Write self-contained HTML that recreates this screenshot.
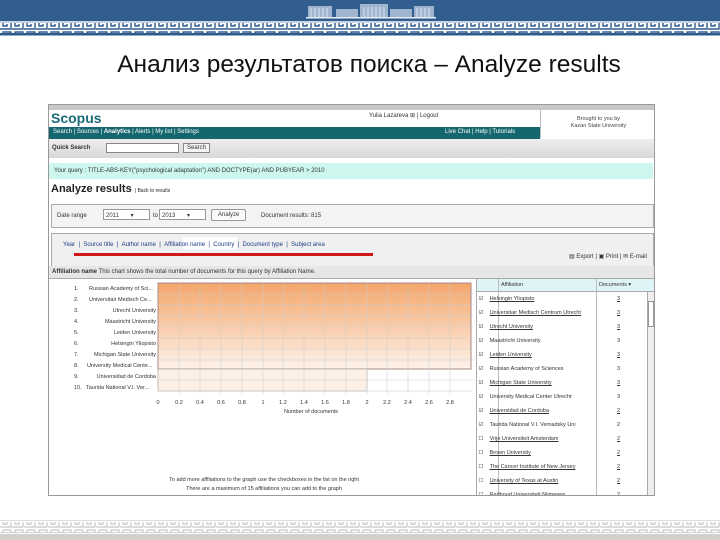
<!DOCTYPE html>
<html><head><meta charset="utf-8"><style>
*{margin:0;padding:0;box-sizing:border-box}
body{width:720px;height:540px;background:#fff;position:relative;overflow:hidden;font-family:"Liberation Sans",sans-serif}
.a{position:absolute}
.s{font-size:6px;color:#333;white-space:nowrap}
</style></head><body>
<svg class="a" style="left:0;top:0" width="720" height="40">
<defs><pattern id="k" width="12" height="10" patternUnits="userSpaceOnUse">
<path d="M0 9H11V2H3V6H7V4" fill="none" stroke="#2f5c8f" stroke-width="1.4"/></pattern>
<pattern id="g" width="12" height="10" patternUnits="userSpaceOnUse">
<path d="M0 9H11V2H3V6H7V4" fill="none" stroke="#c8c8c8" stroke-width="1.2"/></pattern></defs>
<rect width="720" height="21" fill="#325d8f"/>
<rect y="21" width="720" height="2" fill="#c9d5e4"/>
<rect y="23" width="720" height="10" fill="url(#k)"/>
<rect y="33" width="720" height="2.5" fill="#2f5c8f"/>
<g fill="#9fb4cf">
<rect x="308" y="6" width="24" height="12"/><rect x="336" y="9" width="22" height="9"/>
<rect x="360" y="4" width="28" height="14"/><rect x="390" y="9" width="22" height="9"/>
<rect x="414" y="6" width="20" height="12"/><rect x="306" y="17" width="130" height="1.5" fill="#e8eef6"/></g>
<g stroke="#e8eef6" stroke-width=".8"><path d="M311 8V17M315 8V17M319 8V17M323 8V17M327 8V17M364 7V17M368 7V17M372 7V17M376 7V17M380 7V17M384 7V17M417 8V17M421 8V17M425 8V17M429 8V17"/></g>
</svg>
<div class="a" style="left:0;top:51px;width:720px;text-align:center;font-size:24.5px;color:#111;padding-left:18px">Анализ результатов поиска – Analyze results</div>

<div class="a" style="left:48px;top:104px;width:607px;height:392px;border:1px solid #999;background:#fff;overflow:hidden">
<div class="a" style="left:0;top:0;width:607px;height:5px;background:#c8c8c8"></div>
<div class="a" style="left:2px;top:5px;font-size:14px;font-weight:bold;color:#1a6b78">Scopus</div>
<div class="a s" style="left:320px;top:7px">Yulia Lazareva ⊞ | Logout</div>
<div class="a" style="left:491px;top:5px;width:116px;height:28px;border-left:1px solid #bbb;font-size:5.5px;color:#444;text-align:center;padding-top:6px;line-height:7px">Brought to you by<br>Kazan State University</div>
<div class="a" style="left:0;top:22px;width:491px;height:12px;background:#15676f;color:#fff;font-size:6px;padding:2px 4px;white-space:nowrap">Search | Sources | <b>Analytics</b> | Alerts | My list | Settings<span style="position:absolute;left:396px">Live Chat | Help | Tutorials</span></div>
<div class="a" style="left:0;top:34px;width:607px;height:19px;background:linear-gradient(#eee,#d8d8d8)"></div>
<div class="a s" style="left:3px;top:40px;font-weight:bold">Quick Search</div>
<div class="a" style="left:57px;top:38px;width:73px;height:10px;border:1px solid #888;background:#fff"></div>
<div class="a s" style="left:134px;top:38px;border:1px solid #888;background:#f4f4f4;padding:1px 3px">Search</div>
<div class="a" style="left:0;top:58px;width:604px;height:16px;background:#cdf7ee"></div>
<div class="a s" style="left:5px;top:63px">Your query : TITLE-ABS-KEY("psychological adaptation") AND DOCTYPE(ar) AND PUBYEAR &gt; 2010</div>
<div class="a" style="left:2px;top:78px;font-size:11px;font-weight:bold;color:#222">Analyze results <span style="font-size:5px;font-weight:normal">| Back to results</span></div>
<div class="a" style="left:2px;top:99px;width:603px;height:24px;border:1px solid #aaa;background:#f3f3f3"></div>
<div class="a s" style="left:8px;top:108px">Date range</div>
<div class="a s" style="left:54px;top:104px;width:47px;height:11px;border:1px solid #999;background:#fff;padding:2px">2011 &nbsp; &nbsp; &nbsp; ▾</div>
<div class="a s" style="left:104px;top:108px">to</div>
<div class="a s" style="left:110px;top:104px;width:47px;height:11px;border:1px solid #999;background:#fff;padding:2px">2013 &nbsp; &nbsp; &nbsp; ▾</div>
<div class="a s" style="left:162px;top:104px;border:1px solid #999;background:#fafafa;padding:2px 6px;border-radius:2px">Analyze</div>
<div class="a s" style="left:212px;top:108px">Document results: 815</div>
<div class="a" style="left:2px;top:128px;width:603px;height:34px;border:1px solid #aaa;background:#f0f0f0"></div>
<div class="a" style="left:134px;top:132px;width:54px;height:13px;background:#fff"></div>
<div class="a s" style="left:14px;top:137px;color:#1a3d8a">Year &nbsp;| &nbsp;Source title &nbsp;| &nbsp;Author name &nbsp;| &nbsp;Affiliation name &nbsp;| &nbsp;Country &nbsp;| &nbsp;Document type &nbsp;| &nbsp;Subject area</div>
<div class="a" style="left:25px;top:148px;width:299px;height:2.5px;background:#d01818"></div>
<div class="a s" style="left:520px;top:148px">▤ Export | ▣ Print | ✉ E-mail</div>
<div class="a" style="left:0;top:161px;width:607px;height:13px;background:#e6e6e6;border-bottom:1px solid #aaa"></div>
<div class="a s" style="left:3px;top:164px"><b>Affiliation name</b> This chart shows the total number of documents for this query by Affiliation Name.</div>
<svg class="a" style="left:0;top:174px" width="427" height="218">
<defs><linearGradient id="o" x1="0" y1="0" x2="0" y2="1"><stop offset="0" stop-color="#f4a66a"/><stop offset="1" stop-color="#fdf2ea"/></linearGradient></defs>
<rect x="109" y="4" width="313" height="86" fill="url(#o)" stroke="#a88"/>
<rect x="109" y="90" width="209" height="22" fill="#fcefe6" stroke="#999" stroke-width=".6"/>
<g stroke="#ccc" stroke-width=".5">
<path d="M109 15H424M109 26H424M109 37H424M109 48H424M109 59H424M109 70H424M109 81H424M109 101H424M109 112H424"/>
<path d="M130 4V115M151 4V115M172 4V115M193 4V115M214 4V115M234 4V115M255 4V115M276 4V115M297 4V115M318 4V115M338 4V115M359 4V115M380 4V115M401 4V115"/></g>
<g font-size="5.5" fill="#333" font-family="Liberation Sans">
<text x="25" y="11">1.</text><text x="40" y="11">Russian Academy of Sci...</text>
<text x="25" y="22">2.</text><text x="40" y="22">Universitair Medisch Ce...</text>
<text x="25" y="33">3.</text><text x="107" y="33" text-anchor="end">Utrecht University</text>
<text x="25" y="44">4.</text><text x="107" y="44" text-anchor="end">Maastricht University</text>
<text x="25" y="55">5.</text><text x="107" y="55" text-anchor="end">Leiden University</text>
<text x="25" y="66">6.</text><text x="107" y="66" text-anchor="end">Helsingin Yliopisto</text>
<text x="25" y="77">7.</text><text x="107" y="77" text-anchor="end">Michigan State University</text>
<text x="25" y="88">8.</text><text x="38" y="88">University Medical Cente...</text>
<text x="25" y="99">9.</text><text x="107" y="99" text-anchor="end">Universidad de Cordoba</text>
<text x="25" y="110">10.</text><text x="37" y="110">Taurida National V.I. Ver...</text>
<g text-anchor="middle"><text x="109" y="125">0</text><text x="130" y="125">0.2</text><text x="151" y="125">0.4</text><text x="172" y="125">0.6</text><text x="193" y="125">0.8</text><text x="214" y="125">1</text><text x="234" y="125">1.2</text><text x="255" y="125">1.4</text><text x="276" y="125">1.6</text><text x="297" y="125">1.8</text><text x="318" y="125">2</text><text x="338" y="125">2.2</text><text x="359" y="125">2.4</text><text x="380" y="125">2.6</text><text x="401" y="125">2.8</text>
<text x="262" y="134">Number of documents</text>
<text x="215" y="202">To add more affiliations to the graph use the checkboxes in the list on the right</text>
<text x="215" y="211">There are a maximum of 15 affiliations you can add to the graph</text></g></g>
</svg>
<div class="a" style="left:427px;top:174px;width:178px;height:218px;border-left:1px solid #aaa">
<div style="height:13px;background:#dff4f6;border-bottom:1px solid #aaa;font-size:5.5px;color:#333;position:relative"><span class="a" style="left:24px;top:3px">Affiliation</span><span class="a" style="left:122px;top:3px">Documents ▾</span></div>
<div class="a" style="left:21px;top:0;width:1px;height:218px;background:#bbb"></div>
<div class="a" style="left:119px;top:0;width:1px;height:218px;background:#bbb"></div>
<div class="a" style="left:170px;top:13px;width:8px;height:205px;background:#eee;border-left:1px solid #aaa"></div>
<div class="a" style="left:171px;top:22px;width:6px;height:26px;background:#fff;border:1px solid #999"></div>
<div class="a" style="left:0;top:13px;width:170px;font-size:5.5px;color:#333;line-height:14px">
<div>&nbsp;☑ &nbsp; &nbsp;<u>Helsingin Yliopisto</u></div>
<div>&nbsp;☑ &nbsp; &nbsp;<u>Universitair Medisch Centrum Utrecht</u></div>
<div>&nbsp;☑ &nbsp; &nbsp;<u>Utrecht University</u></div>
<div>&nbsp;☑ &nbsp; &nbsp;Maastricht University</div>
<div>&nbsp;☑ &nbsp; &nbsp;<u>Leiden University</u></div>
<div>&nbsp;☑ &nbsp; &nbsp;Russian Academy of Sciences</div>
<div>&nbsp;☑ &nbsp; &nbsp;<u>Michigan State University</u></div>
<div>&nbsp;☑ &nbsp; &nbsp;University Medical Center Utrecht</div>
<div>&nbsp;☑ &nbsp; &nbsp;<u>Universidad de Cordoba</u></div>
<div>&nbsp;☑ &nbsp; &nbsp;Taurida National V.I. Vernadsky Uni</div>
<div>&nbsp;☐ &nbsp; &nbsp;<u>Vrije Universiteit Amsterdam</u></div>
<div>&nbsp;☐ &nbsp; &nbsp;<u>Brown University</u></div>
<div>&nbsp;☐ &nbsp; &nbsp;<u>The Cancer Institute of New Jersey</u></div>
<div>&nbsp;☐ &nbsp; &nbsp;<u>University of Texas at Austin</u></div>
<div>&nbsp;☐ &nbsp; &nbsp;<u>Radboud Universiteit Nijmegen</u></div>
</div>
<div class="a" style="left:140px;top:13px;font-size:5.5px;color:#333;line-height:14px"><u>3</u><br><u>3</u><br><u>3</u><br>3<br><u>3</u><br>3<br><u>3</u><br>3<br><u>2</u><br>2<br><u>2</u><br><u>2</u><br><u>2</u><br><u>2</u><br>2</div>
</div>
</div>

<svg class="a" style="left:0;top:518px" width="720" height="22">
<rect width="720" height="22" fill="#fff"/>
<rect y="2" width="720" height="1" fill="#ddd"/>
<rect y="4" width="720" height="10" fill="url(#g)"/>
<rect y="14" width="720" height="1" fill="#ccc"/>
<rect y="16" width="720" height="6" fill="#d3cfcb"/>
</svg>
</body></html>
